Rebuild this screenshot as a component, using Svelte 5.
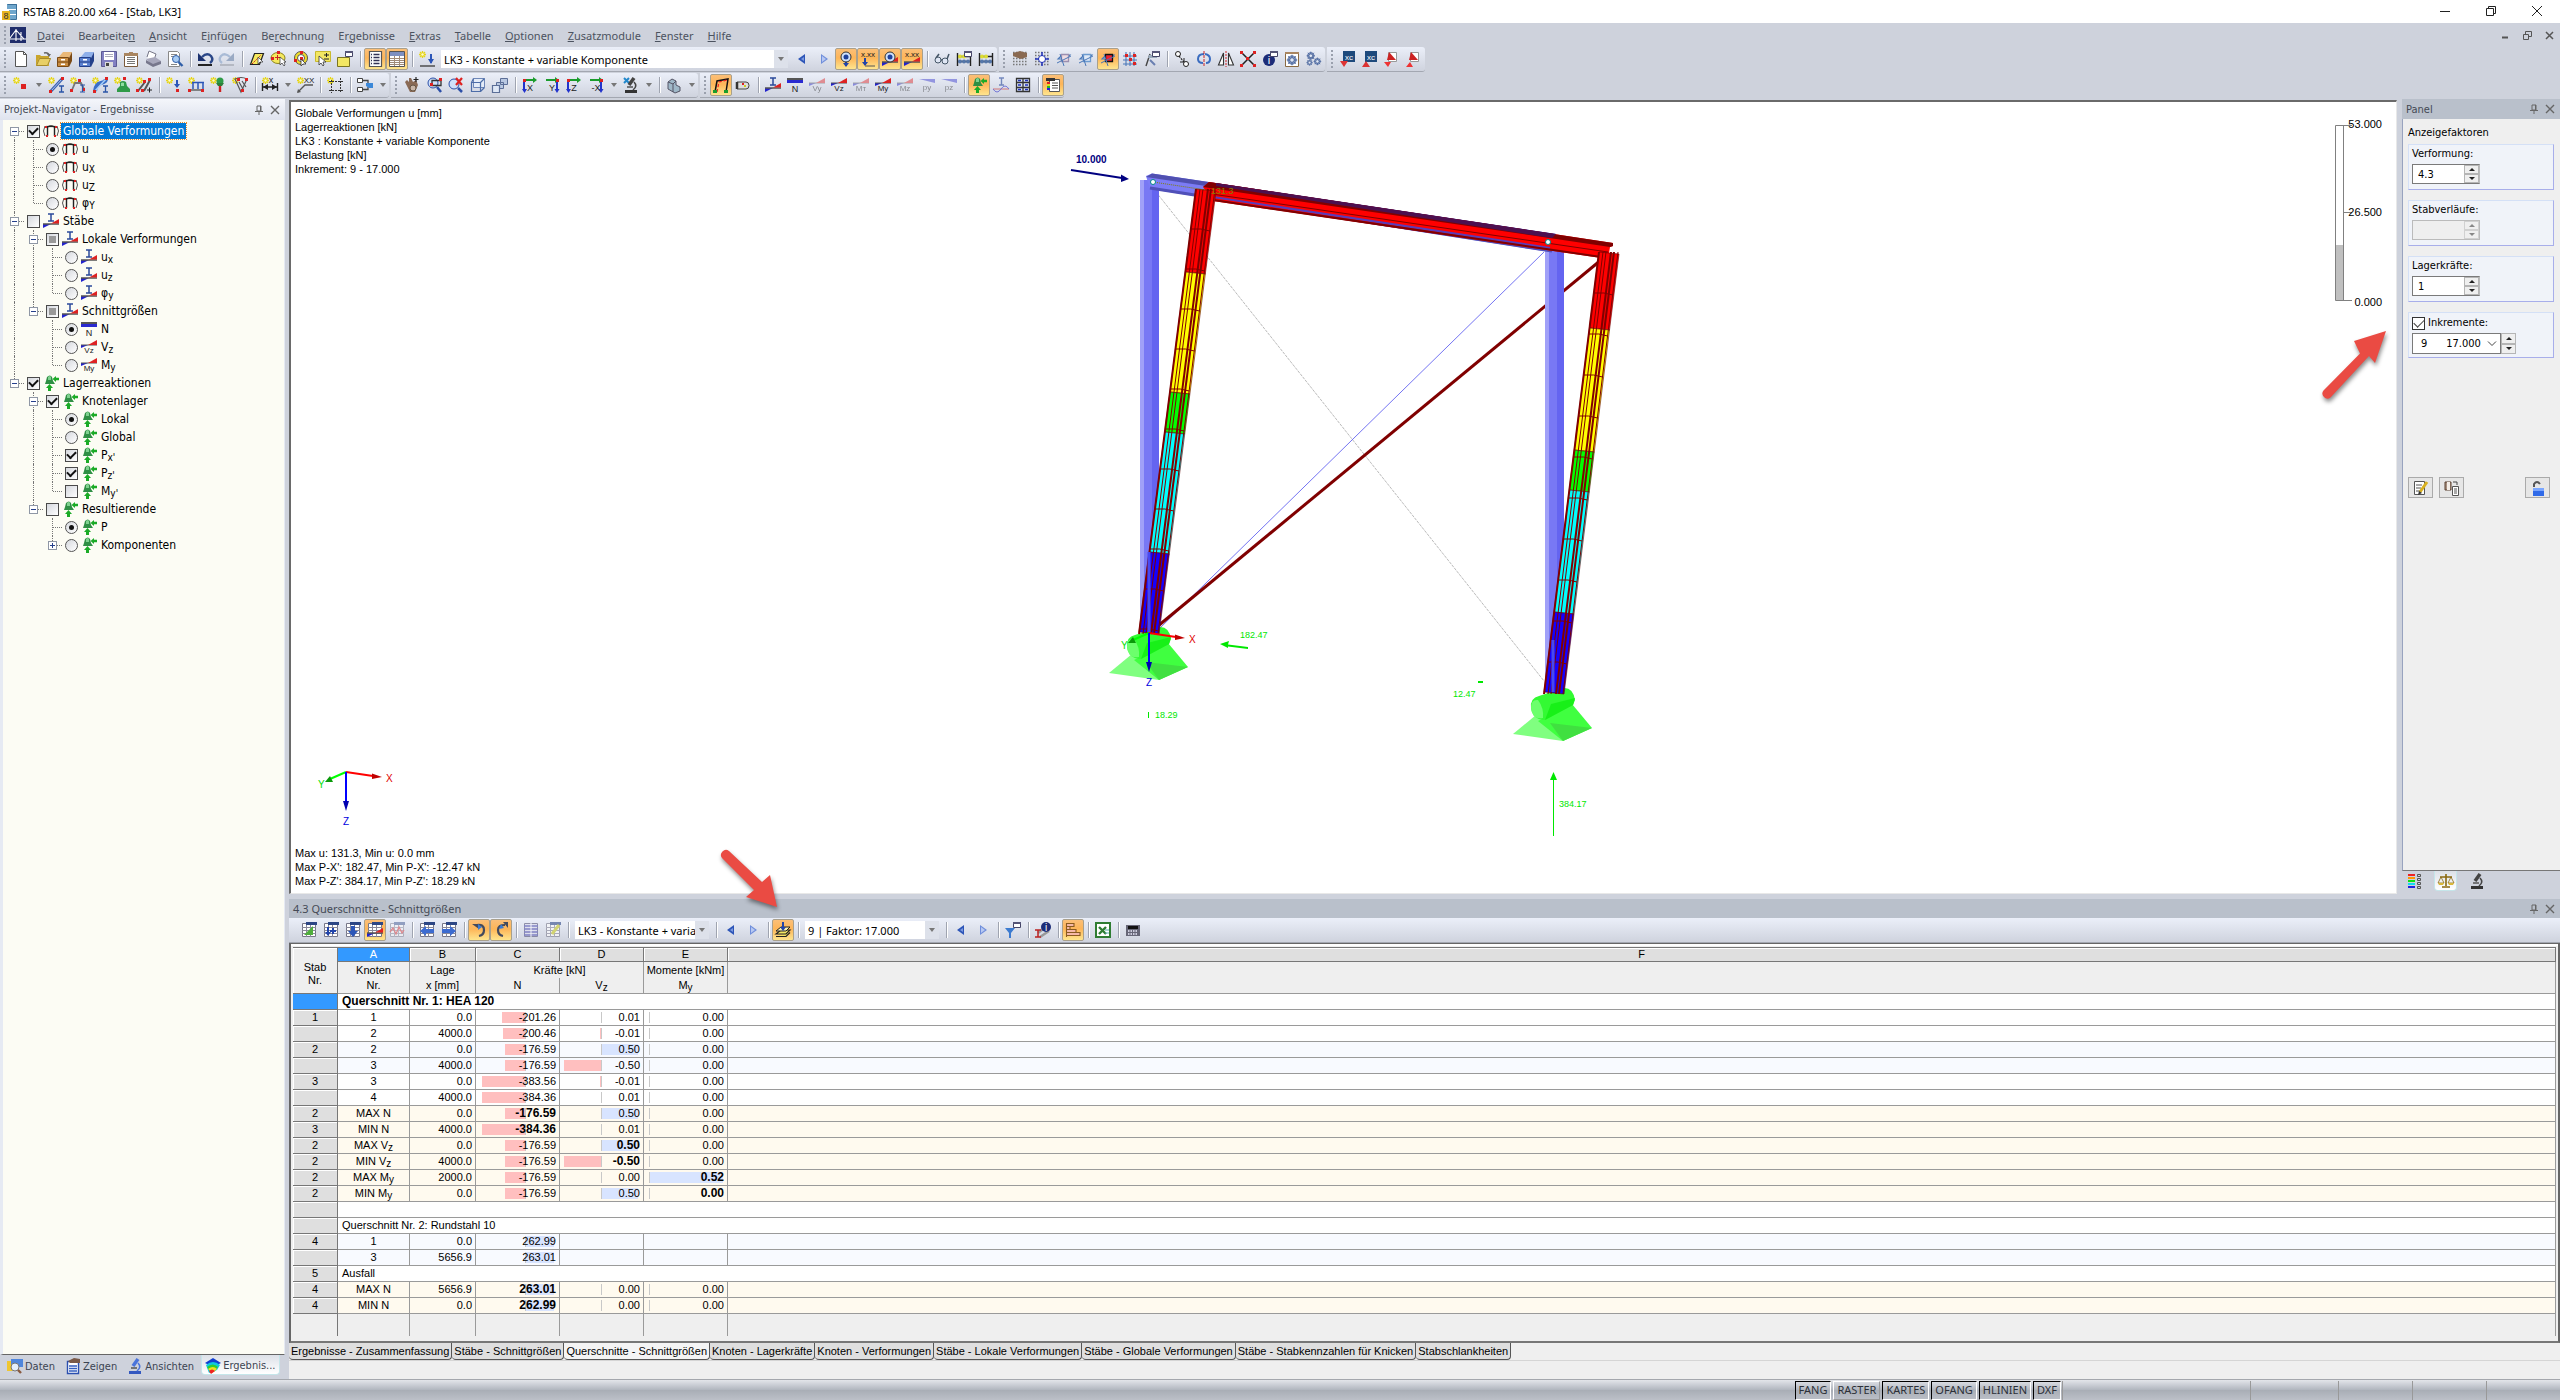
<script>
  // small helpers for the 16x16 toolbar glyphs
  const s = (d, color = '#222', w = 1, fill = 'none') =>
    `<path d="${d}" stroke="${color}" stroke-width="${w}" fill="${fill}"/>`;
  const f = (d, fill) => `<path d="${d}" fill="${fill}"/>`;
  const c = (x, y, r, fill, stroke = 'none') =>
    `<circle cx="${x}" cy="${y}" r="${r}" fill="${fill}" stroke="${stroke}"/>`;
  const t = (x, y, text, color = '#222', size = 8) =>
    `<text x="${x}" y="${y}" font-size="${size}" font-family="Liberation Sans, sans-serif" fill="${color}" text-anchor="middle">${text}</text>`;

  const star = s('M0 3.500h7M3.500 0v7M1 1l5 5M6 1L1 6', '#e6d516', 1.3) + c(3.5, 3.5, 1.2, '#fffbd0');
  const red = (x, y) => f(`M${x} ${y}h3v3h-3z`, '#d22');
  const wedge = f('M0 15V11L8 11Z', '#22c') + s('M0 11h16', '#555', 1.5) + f('M8 10.500L16 6V10.500Z', '#d22');
  const smallWedge = f('M0 6V9L7 6Z', '#22c') + s('M0 6h16', '#555', 1) + f('M7 6L16 1V6Z', '#d22');
  const win = s('M8.500 .5h7v5h-7z', '#446', 1, '#fff') + f('M8 0h8v2H8z', '#557');
  const dots = s('M1 1.500h14M1 4.500h14M1 7.500h14M1 10.500h14M1 13.500h14', '#777', 1.4).replace('/>', ' stroke-dasharray="1.500 1.500"/>');
  const sheet = s('M1.500 1.500h13v13h-13z', '#778', 1, '#fff') + f('M5 0h11v3H5z', '#2c4685') + s('M1 5.500h14M1 8.500h14M1 11.500h14M5.500 3v12M9.500 3v12', '#889');
  const abacus = s('M1.500 2v13M14.500 2v13M1 5.500h14M1 10.500h14', '#222', 1.4) + c(4, 5.5, 2, '#dd3') + c(8, 5.5, 2, '#dd3') + c(4, 10.5, 2, '#57a') + c(8, 10.5, 2, '#57a') + c(12, 10.5, 2, '#57a');
  const chest = (dark, light, mid) => f('M1 7l5-6h9l-3 6z', light) + f('M12 7l3-6v9l-3 6z', dark) + s('M.5 6.500h11v9H.5z', dark, 1, mid) + s('M1 11h10', dark) + f('M4 8h4v1.500H4zM4 12.500h4v1.500H4z', '#fff');
  const axes = (label, flip) =>
    s(flip ? 'M13 3v11' : 'M2 3v11', '#2233cc', 2) +
    s('M2 3h10', '#1a9c2c', 2) + f('M11 0l4 3-4 3z', '#1a9c2c') +
    red(flip ? 12 : 1, 2) + f(flip ? 'M10.500 12h5L13 16z' : 'M0 12h5L2.500 16z', '#2233cc') + t(8, 14, label, '#222', 9);
  const force = (label, color = '#222') => smallWedge + t(8, 14, label, color, 8);
  const support = f('M4 2q3-3 5 0l1 4 2 3H2l1-3z', '#2f8f45') + f('M5 2q2-2 3 0v3H5z', '#7fd18f') + s('M6.500 16v-4', '#1bab27', 3) + f('M3 13l3.500-4 3.500 4z', '#1bab27') + s('M16 4h-4', '#1bab27', 2.5) + f('M13 1v6L9.500 4z', '#1bab27');
  const frame = s('M4.500 13V4Q8 2 11.500 4v9', '#222', 1.4) + s('M2 13Q-1 8 2 3M14 3q3 5 0 10', '#555', 1) + s('M3 3.500h10', '#222', 1.2) + f('M2 3h2v2H2zM12 3h2v2h-2zM3 12h2v2H3zM11 12h2v2h-2z', '#d22');
  const section = s('M5 1h6M8 1v7M5 8h6', '#2b4a9a', 1.5) + wedge;
  const arrowL = f('M11 3v10L4 8z', '#2d55b8') + f('M10 6v4L7 8z', '#7d9ae0');
  const arrowR = f('M5 3v10l7-5z', '#6f8edb') + f('M6 5v6l4-3z', '#b7c8f2');
  const info = c(7, 9, 6, '#1c2c78') + t(7, 13, 'i', '#fff', 11);
  const lens = c(7, 6, 4.5, '#dbe8fb', '#3c5da8') + s('M10 10l5 5', '#3c5da8', 2.5);
  const scope = f('M2 13h12v3H2z', '#333') + s('M11 1L6 8', '#444', 3.5) + s('M11 5q4 4-1 8', '#444', 1.6) + s('M4 10h6', '#555', 1.5);
  const gear = c(8, 8, 5.5, '#8ea6cf', '#3c5488') + s('M8 1v14M1 8h14M3 3l10 10M13 3L3 13', '#4c68a2', 1.4) + c(8, 8, 3, '#dfe7f5', '#3c5488');
  const pyramid = (d) => s('M4.500 1.500h8v9h-8z', '#999', 1, '#fff') + f('M5 1l7 8H3z', '#c22') + f(d, '#e33');
  const view = (color, fill) => s('M2 8l4-4h8l-4 4z', '#4b78b8', 1.1, '#cfe2f7') + s('M5.500 3.500h7v7h-7z', color, 1.3, fill) + s('M8 15L4 3M1 12L15 5', '#4b78b8', 1);

  const icons = {
    new: s('M2.500 .5h8l3 3v12h-11z', '#555', 1, '#fff') + s('M10.500 .5v3h3', '#555'),
    open: f('M1 4h4l1 1h8v10H1z', '#c9a52c') + f('M1 15l3-8h12l-3 8z', '#e8cf66') + s('M1.500 14.500l3-7h11l-3 7z', '#94771a', .8) + s('M9 2q4-1 5 2', '#666', 1.5) + f('M12 3h4l-2 3z', '#666'),
    boxBrown: chest('#7b4a15', '#e9b878', '#c98d42'),
    boxBlue: chest('#24408a', '#8fb0ea', '#5a80cf'),
    save: s('M.5 .5h15v15H.5z', '#5c5a94', 1, '#8280c2') + f('M3 1h10v8H3z', '#fff') + s('M4 3.500h8M4 5.500h8', '#aab') + f('M4 11h8v5H4z', '#ddd') + f('M5 12h3v3H5z', '#444'),
    report: s('M1.500 2.500h13v13h-13z', '#7b5a3b', 1, '#fff') + f('M1 2h5V1h4v1h5v3H1z', '#a98560') + s('M4 6.500h8M4 8.500h8M4 10.500h8M4 12.500h8', '#777', 1),
    print: f('M4 0l7 3-2 6H2z', '#fff') + s('M9 9l2-6-7-3-2 6', '#778', 1) + f('M1 8l9-2 6 4-8 5z', '#a8a8bc') + f('M1 9l7 4 8-3v3l-8 3-7-4z', '#77778c'),
    preview: s('M1.500 .5h9l2 2v13h-11z', '#888', 1, '#fff') + s('M4 3.500h6M4 5.500h3M4 13.500h6', '#888') + c(9, 8, 3.5, '#a9cdf5', '#2f5ea8') + s('M11.500 11l4 4', '#2f5ea8', 2.4),
    undo: s('M5 6q5-5 9-1 3 4-1 7', '#2a4788', 2.4) + f('M1 2v8h8z', '#1c3270') + f('M1 13h14v2H1z', '#222'),
    redo: s('M11 6Q6 1 2 5q-3 4 1 7', '#a9bbd6', 2.2) + f('M15 2v8H7z', '#9aaac4') + f('M1 13h14v2H1z', '#b4b8c2'),
    plane: s('M5.500 2.500h9l-4 11h-9z', '#222', 1.2, '#f5e95e') + s('M3 13l9-9', '#c22').replace('/>', ' stroke-dasharray="2 1"/>') + s('M9 6v7l2-2h3z', '#333', .7, '#fff'),
    selCircle: `<ellipse cx="7" cy="7" rx="7" ry="5.500" fill="#f5e95e" stroke="#8d8420"/>` + red(0, 6) + red(6, 0) + s('M6.500 4v5M4 6.500h5', '#c22') + s('M9 6v8l2-2 2 3 1-1-1-3h2z', '#333', .7, '#fff'),
    selRing: c(8, 7, 6.5, '#f0df2a', '#555') + c(8, 7, 3.5, '#fff', '#555') + red(7, 0) + red(7, 6) + red(1, 8) + s('M8 8v7l2-2h3z', '#333', .8, '#fff'),
    selPlus: s('M.5 .5h15v10H.5z', '#c9ba2e', 1, '#f3e763') + s('M9 4h5M11.500 2v4M9 8h5', '#222') + s('M4 5v9l2-2 2 3 1-1-1-3h3z', '#333', .8, '#fff'),
    winYellow: s('M.5 6.500h12v9H.5z', '#7a7420', 1, '#f3e763') + win,
    list: s('M2.500 .5h12v15h-12z', '#555', 1.2, '#fff') + s('M4 3.500h1M6.500 3.500h6M4 6.500h1M6.500 6.500h6M4 9.500h1M6.500 9.500h6M4 12.500h1M6.500 12.500h6', '#335', 1.3),
    tableIcon: s('M.5 .5h15v15H.5z', '#555', 1, '#fff') + f('M1 1h14v4H1z', '#7d8fc0') + s('M1 7.500h14M1 9.500h14M1 11.500h14M1 13.500h14M5.500 5v10M10.500 5v10', '#a08a78'),
    loadNew: star + s('M12 3v9', '#2a55b8', 2) + f('M9 8h6l-3 5z', '#2a55b8') + s('M1 15h15', '#444', 1.4),
    arrowL, arrowR,
    eyeLoad: s('M8 3v12', '#2244aa', 2) + f('M5 12h6l-3 4z', '#2244aa') + c(8, 6, 5, '#cfe0fa', '#333') + c(8, 6, 2.5, '#1f3f99'),
    xxxLoad: t(8, 6, 'x.xx', '#222', 8) + s('M5 7v7', '#2244aa', 2) + f('M2 11h6l-3 4z', '#2244aa') + s('M5 15h10', '#555'),
    eyeWedge: wedge + c(8, 6, 5, '#cfe0fa', '#333') + c(8, 6, 2.5, '#1f3f99'),
    xxxWedge: t(8, 6, 'x.xx', '#222', 8) + wedge,
    glasses: c(4, 9, 3, '#dfe6f4', '#456') + c(11, 10, 3, '#dfe6f4', '#456') + s('M2 7l3-4M13 8l2-5M7 9h1', '#456', 1.5),
    abacusWin: abacus + win, abacus,
    handGrid: dots + f('M1 2l7-2 7 2v4l-6 2-8-3z', '#8a6a52'),
    gridSun: dots + c(8, 8, 3.5, '#fff', '#23b') + s('M8 1v4M8 11v4M1 8h4M11 8h4', '#23b', 1.5),
    view1: view('#9a8fb0', '#eedbe2'), view2: view('#6c9bd0', '#dfe9f7'), view3: view('#111', '#e23'),
    gridTri: s('M4 1v14M8 1v14M12 1v14M1 5h14M1 9h14M1 13h14', '#4b78b8', 1.1) + red(3, 3) + red(7, 7) + red(11, 3) + red(11, 11),
    flagWin: s('M2 15L6 3', '#444', 1.4) + f('M5 4h8v3H4z', '#9ab') + win + s('M6 9l5 5', '#6a7fb0', 2),
    copyNodes: c(4, 3, 2.5, '#fff', '#222') + c(12, 13, 2.5, '#fff', '#222') + s('M5 5l5 6', '#222', 1.2).replace('/>', ' stroke-dasharray="2 1"/>') + s('M10 7v4H6', '#222'),
    rotate: s('M8 3Q2 3 2 8q0 4 5 4', '#3a6cc0', 2) + s('M9 3q5 1 5 5t-4 4', '#3a6cc0', 2) + s('M8 0v16', '#c22', 1).replace('/>', ' stroke-dasharray="3 1"/>'),
    mirror: s('M5.500 2v12h-5zM10.500 2v12h5z', '#333', 1.1, '#fff') + s('M8 0v16', '#c22').replace('/>', ' stroke-dasharray="2 1"/>'),
    cross: s('M2 2l12 12M14 2L2 14', '#222', 1.5) + red(0, 0) + red(13, 0) + red(0, 13) + red(13, 13) + red(6, 6),
    infoWin: info + win,
    gearSheet: s('M1.500 1.500h13v14h-13z', '#8a6a42', 1, '#fff') + f('M1 1h14v2H1z', '#a98560') + `<g transform="translate(2 3) scale(.75)">${gear}</g>`,
    gears: `<g transform="scale(.6)">${gear}</g><g transform="translate(7 6) scale(.55)">${gear}</g><g transform="translate(0 8) scale(.45)">${gear}</g>`,
    xcDown: f('M3 0h12v11H3z', '#1e4a7c') + t(9, 9, 'xc', '#fff', 8) + f('M0 10h8l-4 6z', '#d33'),
    xcUp: f('M3 0h12v11H3z', '#1e4a7c') + t(9, 9, 'xc', '#fff', 8) + f('M0 16h8l-4-6z', '#d33'),
    pyrDown: pyramid('M0 11h7l-3 5z'), pyrUp: pyramid('M0 16h7l-3-5z'),

    node: star + f('M8 7h5v5H8z', '#d22'),
    member: star + s('M3 14L14 2', '#3a5fae', 3) + s('M3 14L14 2', '#a9c4ee', 1) + red(1, 13) + red(13, 0) + s('M11 9h5M13.500 9v6M11 15h5', '#2b55a8', 1.3),
    polyline: star + s('M2 13l3-7 6 0 3 6', '#777', 1.8) + red(0, 12) + red(8, 2) + red(12, 11) + s('M10 8h5M12.500 8v7M10 15h5', '#2b55a8', 1.2),
    memberSet: star + s('M3 14Q4 7 9 6T14 2', '#3a6fc8', 4) + s('M3 14L14 2', '#a9d0f7', 1.5) + red(1, 13) + red(13, 0) + s('M11 9h5M13.500 9v6M11 15h5', '#2b55a8', 1.3),
    nodeSupport: star + f('M6 5q3-2 6 0l1 4 3 3v3H3v-3l3-3z', '#2f9b48') + f('M7 6q2-1 3 0v3H7z', '#8fdca0') + red(9, 0),
    divide: star + s('M2 14L9 5M8 14L14 3', '#555', 2) + red(0, 12) + red(5, 12) + red(7, 3) + red(12, 1) + s('M11 13h5M13.500 10.500v5', '#222'),
    nodeLoad: star + s('M11 3v7', '#2a55b8', 2) + f('M8 7h6l-3 4z', '#2a55b8') + red(10, 12),
    memberLoad: star + s('M4 5.500h12M5 6v6M10 6v6M15 6v6', '#2a55b8', 1.5) + s('M1 13h14', '#777', 1.8) + red(0, 12) + red(13, 12),
    colLoad: star + c(10, 4, 3.5, '#2f9b48') + f('M6 6h8l-2 3H8z', '#2f7f3c') + s('M10 9v6', '#c22', 2.4),
    tempLoad: star + s('M3 2q6-3 12 0l-6 13z', '#555', 1.2) + s('M10 4l4 6M7 5l4 7', '#555', 1.2) + red(5, 1) + red(13, 1) + red(9, 12),
    dim: star + s('M1 10h14M.5 6v8M15.500 6v8', '#222', 1.4) + f('M1 10l5-3v6zM15 10l-5-3v6z', '#222') + t(9, 6, 'x', '#222', 9),
    comment: star + t(12, 6, 'XX', '#222', 8) + s('M1 15l7-7h8', '#555', 1.3) + f('M0 16l1-4 3 3z', '#555'),
    guide: star + s('M4.500 3v13M13.500 1v15M2 4.500h14M2 13.500h14', '#333').replace('/>', ' stroke-dasharray="2 1"/>'),
    contour: s('M.5 1.500h5v4h-5zM.5 10.500h5v4h-5z', '#444', 1, '#fff') + s('M6 3.500h5V6M6 12.500h5V10', '#444', 1.3) + f('M9 6h7v5h-4l-3-2z', '#3c88d8'),
    hand: f('M1 5l2-2 2 2 0-4 2 0 2 4 3-2 2 5-3 7H6z', '#8a6a55') + s('M12 0v5M9.500 2.500h5', '#222', 1.2) + c(9, 11, 3, '#c9b6a8', '#654'),
    zoomWin: c(7, 6, 5, '#cfe0fa', '#2c4fa8') + s('M6 3.500h9v5H6z', '#333', 1.3) + red(4, 6) + red(13, 1) + s('M11 10l4 5', '#2c4fa8', 2.5),
    zoomOut: c(6, 7, 5, '#cfe0fa', '#2c4fa8') + s('M10 11l4 4', '#2c4fa8', 2.5) + s('M8 1l6 7M14 1L8 8', '#d22', 2.2),
    cube: s('M3.500 1.500h11v9h-11z', '#6f87b8', 1, '#e4ecf8') + s('M1.500 5.500h9v9h-9zM1.500 5.500l2-4M10.500 5.500l4-4M10.500 14.500l4-4', '#4d6da8', 1.2),
    cubes: s('M8.500 1.500h7v6h-7zM4.500 5.500h7v6h-7z', '#5c6f98', 1, '#b9c8e2') + s('M.5 8.500h7v7h-7z', '#5c6f98', 1.2, '#dfe8f6'),
    axX: axes('X'), axY: axes('Y', true), axZ: axes('Z'), axNX: axes('-X', true),
    scopeX: s('M1 1l5 5M6 1L1 6', '#28c', 2) + scope, scope,
    solid: s('M2 5l4-3 4 2v4l4 2v4l-5 2-7-4z', '#556', 1, '#9fb8c8') + s('M2 5l5 2v8M7 7l3-3', '#556'),
    frameSel: s('M2 15L4 4l11-2-2 13', '#111', 1.5) + s('M4 15l2-10 8-2', '#e22', 1.2).replace('/>', ' stroke-dasharray="3 2"/>') + f('M0 13h4v3H0zM11 13h4v3h-4z', '#1a9c2c'),
    cylinder: s('M2 5h9q3 0 3 3.500T11 12H2z', '#444', 1, '#ddd') + s('M2 5v7', '#333', 2.5) + f('M7 6h2v2H7z', '#d22') + f('M9 8h2v2H9z', '#cc2'),
    section, frame, support,
    fN: f('M0 2h16v4H0z', '#2a2ad0') + f('M0 1h16v2H0z', '#555') + t(8, 15, 'N', '#222', 9),
    fVz: force('Vz'), fMy: force('My'),
    dVy: `<g opacity=".45">${force('Vy')}</g>`, dMt: `<g opacity=".45">${force('Mт')}</g>`, dMz: `<g opacity=".45">${force('Mz')}</g>`,
    dPy: `<g opacity=".45">${f('M0 2h16v4z', '#33c') + t(8, 13, 'py')}</g>`, dPz: `<g opacity=".45">${f('M0 2h16v4z', '#33c') + t(8, 13, 'pz')}</g>`,
    sine: `<g opacity=".6">${s('M6 1h5M8.500 1v7M6 8h5', '#2b4a9a', 1.4) + s('M0 12h16', '#c33') + s('M0 12q4 6 8 0t8 0', '#33c')}</g>`,
    grid4: s('M1.500 1.500h13v13h-13zM8 1v14M1 5.500h14M1 10.500h14', '#333', 1.3, '#dde6f8') + s('M3 3.500h3M10 3.500h3M3 8h3M10 8h3M3 12.500h3M10 12.500h3', '#23b', 1.5),
    legend: s('M4.500 2.500h10v12h-10z', '#555', 1, '#fff') + s('M7 6h6M7 8.500h6M7 11h6', '#555') + f('M1 1h9v3H1z', '#333') + f('M2 5h3v2H2z', '#d22') + f('M2 7h3v2H2z', '#dd2') + f('M2 9h3v2H2z', '#2b2') + f('M2 11h3v2H2z', '#22d'),

    tGreen: sheet + f('M3 13L12 4v9z', '#4fae3c'), tPlus: sheet + s('M5 5v8M10 6v6M7 9h6', '#2244aa', 2) + f('M2 10h6l-3 4z', '#2244aa'),
    tDown: sheet + s('M8 4v7', '#2b55b8', 4) + f('M3 9h10l-5 6z', '#2b55b8'), tWedge: sheet + wedge,
    tWave: `<g opacity=".45">${sheet + s('M1 10l3-4 3 6 3-7 3 6 2-3', '#d22', 1.3)}</g>`,
    tLeft: sheet + f('M1 9l6-5v3h8v4H7v3z', '#3c6bd0'), tRight: sheet + f('M15 9L9 4v3H1v4h8v3z', '#3c6bd0'),
    hookR: s('M6 3q7-1 7 5 0 5-5 6', '#444a5c', 2.2) + f('M1 2h7v5z', '#444a5c') + f('M7 2l4 3-4 3z', '#3c7bd0'), hookL: s('M12 3q-7 0-7 5 0 5 5 6', '#444a5c', 2.2) + f('M10 0h5v6z', '#444a5c') + f('M8 2l3 4-5 1z', '#3c7bd0'),
    rows: `<g opacity=".6">${s('M1.500 1.500h13v13h-13z', '#557', 1, '#dde') + s('M1 4h14M1 7h14M1 10h14M1 13h14', '#44a', 1.6) + s('M8 1v14', '#fff')}</g>`,
    pencilSheet: `<g opacity=".6">${sheet + s('M14 3L7 12', '#cc2', 3)}</g>`,
    layers: s('M1 12l5-4h9l-4 4zM1 14.500h10l4-4', '#222', 1.2, '#f3e763') + s('M1 9l5-4h9l-4 4z', '#222', 1, '#fff3b0') + s('M8 0v6', '#2244aa', 2) + f('M5 5h6L8 9z', '#2244aa'),
    filter: f('M0 6h10l-4 5v5H4v-5z', '#3c7bd0') + win, infoMember: s('M3 11l8-6M5 15l9-6', '#999', 2.4) + s('M0 8h6M3 8v7M0 15h6', '#b22', 1.5) + c(11, 5, 5, '#1c2c78') + t(11, 9, 'i', '#fff', 10),
    bars: s('M1.500 1v14M1 1.500h8v3H1M1 4.500h4v3H1M1 7.500h10v3H1M1 10.500h14v3H1', '#8a5a20', 1.1, '#f5b8a8'),
    excel: s('M1 1h14v14H1z', '#2f7d32', 2, '#fff') + s('M4 5l7 7M11 5l-7 7', '#2f7d32', 2.4) + s('M10 8h4M10 11h4', '#5aa', 1),
    calc: f('M1 3h14v11H1z', '#667') + f('M3 4h10v3H3z', '#111') + s('M3 9h10M3 12h10', '#eef', 1.6).replace('/>', ' stroke-dasharray="1.500 1"/>'),

    folderLens: f('M0 3h6v10H0z', '#efc630') + f('M4 1h12v8H4z', '#4f86dc') + c(8, 9, 4, '#e4effb', '#777') + s('M11 12l3 3', '#8a5a40', 2.4),
    show: s('M2.500 3.500h11v12h-11z', '#2b4fb0', 1.4, '#fff') + s('M4 8h8M4 10.500h8M4 13h8', '#345fc0', 1.4) + f('M3 3l6-3 6 1v4H5z', '#7a5a48'),
    scopeBlue: scope.replaceAll('#333', '#3358c0').replaceAll('#444', '#4a74dc'),
    rainbow: f('M0 5l8-5 8 5-8 4z', '#123fd0') + f('M1 7q7-6 14 0l-3 5-8 3z', '#10c8e0') + f('M2 9q6-5 11 0l-3 4-4 2z', '#2fd02f') + f('M3 11q5-4 9 0l-5 4z', '#f0e020') + f('M4 13q3-3 6 0l-4 3z', '#e22'),
    colorScale: ['#e22', '#f90', '#1d1', '#1de', '#22d'].map((k, i) => f(`M1 ${i * 3 + 1}h7v2h-7z`, k)).join('') + s('M10.500 1.500h3v2h-3zM10.500 5.500h3v2h-3zM10.500 9.500h3v2h-3zM10.500 13.500h3v2h-3z', '#555'),
    scales: s('M8 1v12M2 4h12M4 14h8', '#8a6a10', 1.6) + s('M3 4l-3 6h6zM13 4l-3 6h6z', '#8a6a10', .8) + f('M0 10h6l-1 2H1zM10 10h6l-1 2h-4z', '#d8b83a'),
    edit: s('M1.500 1.500h10v13h-10z', '#555', 1, '#fff') + s('M3 5h6M3 8h5M3 11h4', '#555') + s('M14 2L7 12', '#d8b020', 3) + f('M5 15l1-4 3 2z', '#333'),
    pages: s('M1 2h6v8H1z', '#5a4030', 1, '#a89080') + f('M3 2h3v8H3z', '#f4eee8') + s('M8.500 6.500h6v9h-6z', '#555', 1, '#fff') + s('M10 9h3M10 11h3M10 13h3', '#555') + s('M9 2h4v3', '#444'),
    lock: s('M4 7V4q3-4 6 0', '#555', 2) + f('M3 8h11v8H3z', '#2f6ae8') + f('M3 8h11v3H3z', '#7aa6ff'),
    app: f('M5 0h10v5H5zM7 6h8v4H7zM8 11h6v5H8z', '#6fa6cc') + s('M5.500 .5h9v15h-6', '#3b6f98') + f('M0 7h8v9H0z', '#e6b422') + t(4, 15, '8', '#333', 9),
    logo: f('M0 0h16v16H0z', '#1f2d6b') + s('M0 12h16M6 2v12M11 5v9M6 3L0 11M6 3l8 9', '#fff', 1.1)
  };

  // '|' is a separator, 'v' a drop-down marker, '*' marks a pressed button
  const row1a = 'new open boxBrown boxBlue save report print preview | undo redo | plane selCircle selRing selPlus winYellow | *list *tableIcon | loadNew'.split(' ');
  const row1b = 'arrowL arrowR *eyeLoad *xxxLoad *eyeWedge *xxxWedge | glasses abacusWin abacus'.split(' ');
  const row1c = 'handGrid gridSun view1 view2 *view3 gridTri flagWin | copyNodes rotate mirror cross infoWin gearSheet gears'.split(' ');
  const row1d = 'xcDown xcUp pyrDown pyrUp'.split(' ');
  const row2 = [
    'node v member polyline memberSet nodeSupport divide | nodeLoad memberLoad colLoad tempLoad | dim v comment | guide | contour v',
    'hand zoomWin zoomOut cube cubes | axX axY axZ axNX v scopeX v | solid v',
    '*frameSel cylinder | section fN dVy fVz dMt fMy dMz dPy dPz | *support sine grid4 | *legend'
  ].map((row) => row.split(' '));
  const dock1 = 'tGreen tPlus tDown *tWedge tWave | tLeft tRight | *hookR *hookL | rows pencilSheet |'.split(' ');
  const dock2 = '| arrowL arrowR | *layers |'.split(' ');
  const dock3 = '| arrowL arrowR | filter | infoMember | *bars | excel | calc'.split(' ');

  const menus = [
    ['', 'D', 'atei'], ['Bearbeite', 'n', ''], ['', 'A', 'nsicht'], ['E', 'i', 'nfügen'], ['Be', 'r', 'echnung'],
    ['Er', 'g', 'ebnisse'], ['', 'E', 'xtras'], ['', 'T', 'abelle'], ['', 'O', 'ptionen'], ['', 'Z', 'usatzmodule'],
    ['', 'F', 'enster'], ['', 'H', 'ilfe']
  ];

  const nodes = [
    { d: 0, open: true, type: 'checkbox', on: true, icon: 'frame', label: 'Globale Verformungen', selected: true },
    { d: 1, type: 'radio', group: 'global', on: true, icon: 'frame', label: 'u' },
    { d: 1, type: 'radio', group: 'global', icon: 'frame', label: 'u', sub: 'X' },
    { d: 1, type: 'radio', group: 'global', icon: 'frame', label: 'u', sub: 'Z' },
    { d: 1, type: 'radio', group: 'global', icon: 'frame', label: 'φ', sub: 'Y' },
    { d: 0, open: true, type: 'checkbox', icon: 'section', label: 'Stäbe' },
    { d: 1, open: true, type: 'checkbox', mixed: true, icon: 'section', label: 'Lokale Verformungen' },
    { d: 2, type: 'radio', group: 'member', icon: 'section', label: 'u', sub: 'x' },
    { d: 2, type: 'radio', group: 'member', icon: 'section', label: 'u', sub: 'z' },
    { d: 2, type: 'radio', group: 'member', icon: 'section', label: 'φ', sub: 'y' },
    { d: 1, open: true, type: 'checkbox', mixed: true, icon: 'section', label: 'Schnittgrößen' },
    { d: 2, type: 'radio', group: 'member', on: true, icon: 'fN', label: 'N' },
    { d: 2, type: 'radio', group: 'member', icon: 'fVz', label: 'V', sub: 'z' },
    { d: 2, type: 'radio', group: 'member', icon: 'fMy', label: 'M', sub: 'y' },
    { d: 0, open: true, type: 'checkbox', on: true, icon: 'support', label: 'Lagerreaktionen' },
    { d: 1, open: true, type: 'checkbox', on: true, icon: 'support', label: 'Knotenlager' },
    { d: 2, type: 'radio', group: 'axes', on: true, icon: 'support', label: 'Lokal' },
    { d: 2, type: 'radio', group: 'axes', icon: 'support', label: 'Global' },
    { d: 2, type: 'checkbox', on: true, icon: 'support', label: 'P', sub: "x'" },
    { d: 2, type: 'checkbox', on: true, icon: 'support', label: 'P', sub: "z'" },
    { d: 2, type: 'checkbox', icon: 'support', label: 'M', sub: "y'" },
    { d: 1, open: true, type: 'checkbox', icon: 'support', label: 'Resultierende' },
    { d: 2, type: 'radio', group: 'result', on: true, icon: 'support', label: 'P' },
    { d: 2, open: false, type: 'radio', group: 'result', icon: 'support', label: 'Komponenten' }
  ];

  // does the branch at this depth go on below row i?
  function continues(i, depth) {
    for (let j = i + 1; j < nodes.length; j++) {
      if (nodes[j].d < depth) return false;
      if (nodes[j].d === depth) return true;
    }
    return false;
  }

  function guides(node, i) {
    const cells = [];
    for (let k = 0; k < node.d; k++) cells.push(continues(i, k) ? 'full' : '');
    return cells;
  }

  const rows = [
    { nr: '', title: 'Querschnitt Nr. 1: HEA 120', bold: true, current: true },
    { nr: '1', v: ['1', '0.0', '-201.26', '0.01', '0.00'] },
    { nr: '', v: ['2', '4000.0', '-200.46', '-0.01', '0.00'] },
    { nr: '2', v: ['2', '0.0', '-176.59', '0.50', '0.00'], tone: 'blue' },
    { nr: '', v: ['3', '4000.0', '-176.59', '-0.50', '0.00'], tone: 'blue' },
    { nr: '3', v: ['3', '0.0', '-383.56', '-0.01', '0.00'] },
    { nr: '', v: ['4', '4000.0', '-384.36', '0.01', '0.00'] },
    { nr: '2', v: ['MAX N', '0.0', '-176.59', '0.50', '0.00'], tone: 'cream', strong: 2 },
    { nr: '3', v: ['MIN N', '4000.0', '-384.36', '0.01', '0.00'], tone: 'cream', strong: 2 },
    { nr: '2', v: ['MAX V', '0.0', '-176.59', '0.50', '0.00'], sub: 'z', tone: 'cream', strong: 3 },
    { nr: '2', v: ['MIN V', '4000.0', '-176.59', '-0.50', '0.00'], sub: 'z', tone: 'cream', strong: 3 },
    { nr: '2', v: ['MAX M', '2000.0', '-176.59', '0.00', '0.52'], sub: 'y', tone: 'cream', strong: 4 },
    { nr: '2', v: ['MIN M', '0.0', '-176.59', '0.50', '0.00'], sub: 'y', tone: 'cream', strong: 4 },
    { nr: '', title: '' },
    { nr: '', title: 'Querschnitt Nr. 2: Rundstahl 10' },
    { nr: '4', v: ['1', '0.0', '262.99', '', ''], tone: 'blue' },
    { nr: '', v: ['3', '5656.9', '263.01', '', ''], tone: 'blue' },
    { nr: '5', title: 'Ausfall' },
    { nr: '4', v: ['MAX N', '5656.9', '263.01', '0.00', '0.00'], tone: 'cream', strong: 2 },
    { nr: '4', v: ['MIN N', '0.0', '262.99', '0.00', '0.00'], tone: 'cream', strong: 2 }
  ];

  // zero line and pixels per unit of the value bars, by column
  const scale = { 2: { zero: 49, unit: 43 / 384.36 }, 3: { zero: 41, unit: 37 / 0.5 }, 4: { zero: 5, unit: 74 / 0.52 } };

  function bar(col, text) {
    const value = Number(text);
    const { zero, unit } = scale[col];
    const width = Math.round(Math.abs(value) * unit);
    return { width, left: value < 0 ? zero - width : zero, negative: value < 0 };
  }

  const sheets = [
    'Ergebnisse - Zusammenfassung', 'Stäbe - Schnittgrößen', 'Querschnitte - Schnittgrößen', 'Knoten - Lagerkräfte',
    'Knoten - Verformungen', 'Stäbe - Lokale Verformungen', 'Stäbe - Globale Verformungen',
    'Stäbe - Stabkennzahlen für Knicken', 'Stabschlankheiten'
  ];
  let activeSheet = $state(2);

  const toggles = ['FANG', 'RASTER', 'KARTES', 'OFANG', 'HLINIEN', 'DXF'];

  // deformed columns: left edge at the top and bottom, colour bands by y
  const columns = [
    { top: [1196, 189], bottom: [1139, 632], step: 40, bands: [[189, 272, '#f00'], [272, 392, '#ff0'], [392, 432, '#0f0'], [432, 552, '#0ff'], [552, 632, '#1400ff']] },
    { top: [1599, 252], bottom: [1544, 692], step: 41, bands: [[252, 328, '#f00'], [328, 450, '#ff0'], [450, 490, '#0f0'], [490, 612, '#0ff'], [612, 692, '#1400ff']] }
  ];
  const edge = (col, y) => col.top[0] + ((y - col.top[1]) * (col.bottom[0] - col.top[0])) / (col.bottom[1] - col.top[1]);
  const band = (col, [y1, y2]) =>
    `${edge(col, y1)},${y1} ${edge(col, y1) + 20},${y1 + 2} ${edge(col, y2) + 20},${y2 + 2} ${edge(col, y2)},${y2}`;
  const rungs = (col) => {
    const ys = [];
    for (let y = col.top[1] + col.step; y < col.bottom[1]; y += col.step) ys.push(y);
    return ys;
  };
</script>

{#snippet glyph(name)}
  <svg class="icon" viewBox="0 0 16 16" width="16" height="16" fill="none" aria-hidden="true">{@html icons[name]}</svg>
{/snippet}

{#snippet tools(items)}
  {#each items as item}
    {#if item === '|'}
      <span class="sep"></span>
    {:else if item === 'v'}
      <button class="drop" aria-label="Mehr"><i class="caret"></i></button>
    {:else}
      <button class="tool" class:pressed={item[0] === '*'} aria-label={item.replace('*', '')}>{@render glyph(item.replace('*', ''))}</button>
    {/if}
  {/each}
{/snippet}

{#snippet pinClose()}
  <span class="dock-buttons">
    <button aria-label="Anheften"><svg width="10" height="10" viewBox="0 0 10 10"><path d="M3 1h4v5H3zM1 6.500h8M5 6v4M6.500 1v5" fill="none" stroke="#666" /></svg></button>
    <button aria-label="Schließen"><svg width="10" height="10" viewBox="0 0 10 10"><path d="M1 1l8 8M9 1L1 9" stroke="#666" stroke-width="1.4" /></svg></button>
  </span>
{/snippet}

{#snippet bearing(x, y)}
  <g transform="translate({x} {y})">
    <path d="M0 46L23 27 38 36 50 53Z" fill="#80ff80" />
    <path d="M25 33L59 16 79 40 50 53Z" fill="#40ff40" />
    <path d="M37 35L79 40 50 53Z" fill="#40e040" />
    <path d="M18 20Q17 10 26 8L50 0Q60 -1 62 12L60 17 32 32Q20 32 18 20Z" fill="#33fa33" />
    <path d="M18 20Q18 11 25 12 31 20 30 30 19 32 18 20Z" fill="#6cff6c" />
    <path d="M38 16L62 10 60 17 32 32Z" fill="#18f018" />
  </g>
{/snippet}

{#snippet triad(x, y, ax)}
  <g transform="translate({x} {y})">
    <path d="M0 0L-16 7" stroke="#0f0" stroke-width="2" />
    <path d="M-21 10L-16 4-13 10Z" fill="#0a9a0a" />
    <path d="M0 0L27 4" stroke="#f00" stroke-width="2" />
    <path d="M36 5L26 1.500V7Z" fill="#c00000" />
    <path d="M0 0V31" stroke="#00f" stroke-width="2" />
    <path d="M-3 29H3L0 39Z" fill="#0000b0" />
    <text x={ax} y="10" fill="#e00000">X</text>
    <text x="-28" y="16" fill="#00e000">Y</text>
    <text x="-3" y="53" fill="#0000e0">Z</text>
  </g>
{/snippet}

<div class="app">
  <header class="titlebar">
    {@render glyph('app')}
    <span class="title">RSTAB 8.20.00 x64 - [Stab, LK3]</span>
    <span class="window-buttons">
      <button aria-label="Minimieren"><svg width="10" height="10"><path d="M0 5.500h10" stroke="#222" /></svg></button>
      <button aria-label="Verkleinern"><svg width="10" height="10"><path d="M.5 2.500h7v7h-7zM2.500 2V.5h7v7H8" fill="none" stroke="#222" /></svg></button>
      <button aria-label="Schließen"><svg width="10" height="10"><path d="M0 0l10 10M10 0L0 10" stroke="#222" /></svg></button>
    </span>
  </header>

  <nav class="menubar">
    <span class="grip"></span>
    {@render glyph('logo')}
    {#each menus as [before, key, after]}
      <button>{before}<u>{key}</u>{after}</button>
    {/each}
    <span class="child-buttons">
      <button aria-label="Fenster minimieren"><svg width="9" height="9"><path d="M1 6.500h6" stroke="#555" stroke-width="2" /></svg></button>
      <button aria-label="Fenster verkleinern"><svg width="9" height="9"><path d="M.5 3.500h5v5h-5zM2.500 3V.5h6v5H6" fill="none" stroke="#555" /></svg></button>
      <button aria-label="Fenster schließen"><svg width="9" height="9"><path d="M1 1l7 7M8 1L1 8" stroke="#555" stroke-width="1.500" /></svg></button>
    </span>
  </nav>

  <div class="toolrow">
    <div class="toolbar">
      <span class="grip"></span>
      {@render tools(row1a)}
      <div class="combo wide">
        <select aria-label="Lastkombination"><option>LK3 - Konstante + variable Komponente</option></select>
        <i class="caret"></i>
      </div>
      {@render tools(row1b)}
    </div>
    <div class="toolbar"><span class="grip"></span>{@render tools(row1c)}</div>
    <div class="toolbar"><span class="grip"></span>{@render tools(row1d)}</div>
  </div>
  <div class="toolrow">
    {#each row2 as items}
      <div class="toolbar"><span class="grip"></span>{@render tools(items)}</div>
    {/each}
  </div>

  <div class="body">
    <aside class="navigator">
      <div class="nav-head"><span>Projekt-Navigator - Ergebnisse</span>{@render pinClose()}</div>
      <div class="tree">
        {#each nodes as node, i}
          <div class="node">
            {#each guides(node, i) as guide}
              <span class="guide {guide}"></span>
            {/each}
            <span class="guide tee" class:first={i === 0} class:last={!continues(i, node.d)}>
              {#if node.open !== undefined}
                <button class="expander" class:plus={!node.open} aria-label="Auf- oder zuklappen"></button>
              {/if}
            </span>
            <label>
              {#if node.type === 'radio'}
                <input type="radio" name={node.group} checked={node.on} />
              {:else}
                <input type="checkbox" checked={node.on} indeterminate={node.mixed} />
              {/if}
              {@render glyph(node.icon)}
              <span class="caption" class:selected={node.selected}>{node.label}{#if node.sub}<small>{node.sub}</small>{/if}</span>
            </label>
          </div>
        {/each}
      </div>
      <div class="nav-tabs">
        <button>{@render glyph('folderLens')}Daten</button>
        <button>{@render glyph('show')}Zeigen</button>
        <button>{@render glyph('scopeBlue')}Ansichten</button>
        <button class="active">{@render glyph('rainbow')}Ergebnis...</button>
      </div>
    </aside>

    <main>
      <div class="upper">
        <section class="viewport">
          <svg class="scene" viewBox="291 102 2105 791" aria-label="Verformtes Rahmentragwerk">
            <path d="M1156 192L1544 681" stroke="#bbb" stroke-dasharray="3 1" />
            <path d="M1544 252L1160 628" stroke="#7474f2" />
            {@render bearing(1109, 627)}
            {@render bearing(1513, 688)}

            <path d="M1601 260L1158 626" stroke="#800000" stroke-width="3" />
            {#each [[1140, 180, 632], [1545, 243, 692]] as [x, y1, y2]}
              <path d="M{x} {y1}h5V{y2}h-5z" fill="#a0a0f8" />
              <path d="M{x + 4} {y1}h8V{y2}h-8z" fill="#7878f4" />
              <path d="M{x + 12} {y1}h7V{y2}h-7z" fill="#6464f0" />
            {/each}
            <path d="M1146 176L1152 173.500 1556 234 1550 252 1150 189Z" fill="#7c7cf6" />
            <path d="M1146 177L1152 173.500 1556 234 1552 238Z" fill="#5050b0" />
            <path d="M1150 188L1552 251" stroke="#5050b8" stroke-width="3" />

            <path d="M1203 187L1209 182 1613 243 1613 246 1610 247 1608 259 1213 201Z" fill="#f00" />
            <path d="M1203 187L1209 182 1613 243 1613 246 1610 247 1203 187Z" fill="#800000" />
            <path d="M1216 183L1556 234 1552 238 1216 186Z" fill="#4c1050" />
            <path d="M1205 193L1608 252" stroke="#800000" stroke-width="1" />
            <path d="M1213 197L1550 248" stroke="#5a3cb8" stroke-width="2" />
            <path d="M1213 200L1608 258" stroke="#800000" stroke-width="2" />

            {#each columns as col}
              {#each col.bands as b}
                <polygon points={band(col, b)} fill={b[2]} stroke="#600000" stroke-width=".6" />
              {/each}
              {#each rungs(col) as y}
                <path d="M{edge(col, y)} {y}l10 0 9 2" stroke="#800000" fill="none" />
              {/each}
              {#each [[0, 2], [4, 1], [7, 1], [12, 2], [15, 2], [19, 1]] as [dx, w]}
                <path d="M{col.top[0] + dx} {col.top[1]}L{col.bottom[0] + dx} {col.bottom[1] + 2}" stroke="#800000" stroke-width={w} />
              {/each}
            {/each}
            <path d="M1149 552V632M1553 640V692" stroke="#4848f0" stroke-width="3" />

            <path d="M1153 182L1206 190" stroke="#808000" stroke-dasharray="1 1" />
            <circle cx="1153" cy="182" r="2.500" fill="#fff" stroke="#088" />
            <circle cx="1548" cy="242" r="2.500" fill="#fff" stroke="#088" />

            <path d="M1071 170L1122 178" stroke="#000080" stroke-width="2" />
            <path d="M1129 179L1121 174.500V182Z" fill="#000080" />
            <text x="1076" y="163" class="load">10.000</text>
            <text x="1211" y="194" class="value" fill="#808000">131.3</text>

            <g fill="#00e800" stroke="none">
              <path d="M1220 644L1229 641 1228 644.500 1248 647 1248 649 1228 646.500 1228 648Z" />
              <path d="M1478 681h5v2h-5zM1148 712h1v6h-1z" />
              <path d="M1550 780L1553.500 772 1557 780H1554V836H1553V780Z" />
              <text x="1240" y="638" class="value">182.47</text>
              <text x="1453" y="697" class="value">12.47</text>
              <text x="1155" y="718" class="value">18.29</text>
              <text x="1559" y="807" class="value">384.17</text>
            </g>
            {@render triad(1149, 633, 40)}
            {@render triad(346, 772, 40)}

            <path d="M2335.500 125.500h8v175h-8z" fill="#fff" stroke="#808080" />
            <path d="M2336 245h7v55h-7z" fill="#c0c0c0" />
            <path d="M2343 125.500h9M2343 212.500h9M2343 300.500h9" stroke="#808080" />
            <g class="scale-text" text-anchor="end">
              <text x="2382" y="128">53.000</text>
              <text x="2382" y="216">26.500</text>
              <text x="2382" y="306">0.000</text>
            </g>
          </svg>
          <div class="info">
            <span>Globale Verformungen u [mm]</span>
            <span>Lagerreaktionen [kN]</span>
            <span>LK3 : Konstante + variable Komponente</span>
            <span>Belastung [kN]</span>
            <span>Inkrement: 9 - 17.000</span>
          </div>
          <div class="info results">
            <span>Max u: 131.3, Min u: 0.0 mm</span>
            <span>Max P-X': 182.47, Min P-X': -12.47 kN</span>
            <span>Max P-Z': 384.17, Min P-Z': 18.29 kN</span>
          </div>
          <svg class="pointer at-panel" width="70" height="74" viewBox="0 0 70 74"><path d="M3.500 62.500L40 25.500 34 13 66 3 55 35 49 28 10.500 69.500A5 5 0 0 1 3.500 62.500Z" fill="#ea4b43" /></svg>
          <svg class="pointer at-dock" width="66" height="66" viewBox="0 0 66 66"><path d="M12 4L45 35 53 28 60 60 29 50 37 43 5 11A5 5 0 0 1 12 4Z" fill="#ea4b43" /></svg>
        </section>

        <aside class="panel">
          <div class="panel-head"><span>Panel</span>{@render pinClose()}</div>
          <div class="panel-body">
            <p>Anzeigefaktoren</p>
            {#each [['Verformung:', '4.3', false], ['Stabverläufe:', '', true], ['Lagerkräfte:', '1', false]] as [name, value, off], i}
              <div class="factor">
                <label for="factor{i}">{name}</label>
                <div class="spin" class:off>
                  <input id="factor{i}" type="text" {value} disabled={off} />
                  <span class="updown"><button aria-label="Mehr" disabled={off}></button><button aria-label="Weniger" disabled={off}></button></span>
                </div>
              </div>
            {/each}
            <div class="factor">
              <label class="tick"><input type="checkbox" checked /> Inkremente:</label>
              <div class="increment">
                <select aria-label="Inkrement"><option>9 &nbsp;&nbsp;&nbsp;&nbsp; 17.000</option></select>
                <svg width="10" height="6"><path d="M1 .5l4 4 4-4" fill="none" stroke="#444" /></svg>
                <span class="updown"><button aria-label="Mehr"></button><button aria-label="Weniger"></button></span>
              </div>
            </div>
            <div class="actions">
              <button aria-label="Bearbeiten">{@render glyph('edit')}</button>
              <button aria-label="Kopieren">{@render glyph('pages')}</button>
              <button class="right" aria-label="Sperren">{@render glyph('lock')}</button>
            </div>
          </div>
          <div class="panel-tabs">
            <button aria-label="Farbskala">{@render glyph('colorScale')}</button>
            <button class="active" aria-label="Faktoren">{@render glyph('scales')}</button>
            <button aria-label="Filter">{@render glyph('scope')}</button>
          </div>
        </aside>
      </div>

      <section class="dock">
        <div class="panel-head"><span>4.3 Querschnitte - Schnittgrößen</span>{@render pinClose()}</div>
        <div class="dock-tools">
          {@render tools(dock1)}
          <div class="combo">
            <select aria-label="Lastkombination der Tabelle"><option>LK3 - Konstante + variable Komponente</option></select>
            <i class="caret"></i>
          </div>
          {@render tools(dock2)}
          <div class="combo">
            <select aria-label="Laststufe"><option>9 | Faktor: 17.000</option></select>
            <i class="caret"></i>
          </div>
          {@render tools(dock3)}
        </div>
        <div class="sheet">
          <table>
            <colgroup>
              <col class="c-nr" /><col class="c-a" /><col class="c-b" /><col class="c-c" /><col class="c-d" /><col class="c-e" /><col />
            </colgroup>
            <thead>
              <tr class="letters">
                <th class="corner" rowspan="3">Stab<br />Nr.</th>
                <th class="chosen">A</th><th>B</th><th>C</th><th>D</th><th>E</th><th>F</th>
              </tr>
              <tr class="names"><th>Knoten</th><th>Lage</th><th colspan="2">Kräfte [kN]</th><th>Momente [kNm]</th><th></th></tr>
              <tr class="names units"><th>Nr.</th><th>x [mm]</th><th>N</th><th>V<small>z</small></th><th>M<small>y</small></th><th></th></tr>
            </thead>
            <tbody>
              {#each rows as row}
                <tr class={row.tone}>
                  <th class:current={row.current}>{row.nr}</th>
                  {#if row.v}
                    {#each row.v as value, col}
                      <td class:center={col === 0} class:strong={row.strong === col}>
                        {#if col > 1 && value !== ''}
                          {@const b = bar(col, value)}
                          <i class="bar" class:negative={b.negative} style="left: {b.left}px; width: {b.width}px"></i>
                          <i class="zero" style="left: {scale[col].zero}px"></i>
                        {/if}
                        <span>{value}{#if col === 0 && row.sub}<small>{row.sub}</small>{/if}</span>
                      </td>
                    {/each}
                    <td></td>
                  {:else}
                    <td class="heading" class:strong={row.bold} colspan="6">{row.title}</td>
                  {/if}
                </tr>
              {/each}
              <tr class="rest"><th></th><td></td><td></td><td></td><td></td><td></td><td></td></tr>
            </tbody>
          </table>
        </div>
        <div class="sheet-tabs">
          {#each sheets as name, i}
            <button class:active={i === activeSheet} onclick={() => (activeSheet = i)}>{name}</button>
          {/each}
        </div>
      </section>
    </main>
  </div>

  <footer class="statusbar">
    <div class="toggles">
      {#each toggles as name}
        <button class:raised={name === 'RASTER'}>{name}</button>
      {/each}
    </div>
    <span class="cell w1"></span><span class="cell w2"></span><span class="cell w3"></span><span class="cell w3"></span><span class="cell w3"></span>
  </footer>
</div>

<style>
  :global(body) {
    margin: 0;
    overflow: hidden;
  }

  .app {
    height: 100vh;
    display: flex;
    flex-direction: column;
    background: #ced2dc;
    font-family: 'Noto Sans', sans-serif;
    font-size: 11px;
    color: #000;
  }

  .app * {
    box-sizing: border-box;
  }

  button,
  input,
  select {
    font: inherit;
    color: inherit;
    margin: 0;
    padding: 0;
    border: 0;
    background: none;
  }

  .icon {
    flex: none;
    display: block;
    overflow: visible;
  }

  small {
    font-size: 10px;
    line-height: 0;
    vertical-align: -2px;
  }

  /* title and menu */
  .titlebar {
    height: 23px;
    flex: none;
    display: flex;
    align-items: center;
    gap: 5px;
    padding-left: 2px;
    background: #fff;
  }

  .window-buttons {
    margin-left: auto;
    display: flex;
  }

  .window-buttons button {
    width: 46px;
    height: 20px;
  }

  .menubar {
    height: 24px;
    flex: none;
    display: flex;
    align-items: center;
    color: #4c5360;
  }

  .menubar > button {
    padding: 0 7px;
  }

  .menubar .icon {
    margin-right: 4px;
  }

  .child-buttons {
    margin-left: auto;
    display: flex;
  }

  .child-buttons button {
    width: 22px;
  }

  .grip {
    width: 10px;
    height: 18px;
    flex: none;
    border-left: 2px dotted #9aa0ad;
    margin-left: 4px;
    margin-right: -4px;
  }

  /* toolbars */
  .toolrow {
    height: 26px;
    flex: none;
    display: flex;
    gap: 2px;
  }

  .toolbar,
  .dock-tools {
    height: 25px;
    display: flex;
    align-items: center;
    background: linear-gradient(#ebeff9, #cfd3de);
    border-bottom: 1px solid #a3a7b1;
    border-radius: 0 3px 3px 0;
  }

  .tool {
    width: 22px;
    height: 22px;
    flex: none;
    display: flex;
    align-items: center;
    justify-content: center;
  }

  .pressed {
    border: 1px solid #a9a08c;
    border-radius: 2px;
    background: linear-gradient(#fbbf78, #fdb558 45%, #fee58e);
  }

  .sep {
    width: 8px;
    height: 16px;
    flex: none;
    border-left: 1px solid #9fa4b0;
    box-shadow: inset 1px 0 #fff;
    margin-left: 4px;
    margin-right: -4px;
  }

  .drop {
    width: 13px;
    height: 20px;
    flex: none;
    display: flex;
    align-items: center;
    justify-content: center;
  }

  .caret {
    border: 3px solid transparent;
    border-top: 4px solid #777;
    border-bottom: 0;
  }

  .combo {
    width: 134px;
    height: 18px;
    flex: none;
    display: flex;
    align-items: center;
    position: relative;
    background: #fff;
    margin: 0 3px;
  }

  .combo.wide {
    width: 347px;
  }

  .combo select {
    appearance: none;
    flex: 1;
    min-width: 0;
    height: 18px;
    padding-left: 3px;
    border-right: 14px solid #dde1ea;
    text-overflow: clip;
  }

  .combo .caret {
    position: absolute;
    right: 4px;
    pointer-events: none;
  }

  /* navigator */
  .body {
    flex: 1;
    min-height: 0;
    display: flex;
  }

  .navigator {
    width: 285px;
    flex: none;
    display: flex;
    flex-direction: column;
    margin-right: 4px;
    font-family: 'DejaVu Sans Condensed', 'DejaVu Sans', sans-serif;
  }

  .nav-head,
  .panel-head {
    height: 20px;
    flex: none;
    display: flex;
    align-items: center;
    justify-content: space-between;
    padding: 0 5px 0 4px;
    color: #444a55;
  }

  .nav-head {
    height: 21px;
    background: linear-gradient(#f4f6fb, #dfe3ee);
  }

  .panel-head {
    background: #b9c0cb;
  }

  .dock-buttons {
    display: flex;
    gap: 6px;
  }

  .dock-buttons button {
    width: 10px;
    height: 10px;
    display: flex;
  }

  .tree {
    flex: 1;
    min-height: 0;
    background: #fcfcf4;
    border-left: 3px solid #e6eaf3;
    border-right: 1px solid #e6eaf3;
    border-bottom: 1px solid #666;
    padding: 2px 0 0 2px;
    font-size: 12px;
  }

  .node,
  .node label {
    display: flex;
    align-items: center;
    height: 18px;
  }

  .guide {
    width: 19px;
    height: 18px;
    flex: none;
    display: flex;
    position: relative;
    align-items: center;
    justify-content: center;
  }

  .guide.full::before,
  .guide.tee::before {
    content: '';
    position: absolute;
    left: 9px;
    top: 0;
    bottom: 0;
    border-left: 1px dotted #777;
  }

  .guide.tee.first::before {
    top: 9px;
  }

  .guide.tee.last::before {
    bottom: 9px;
  }

  .guide.tee::after {
    content: '';
    position: absolute;
    left: 10px;
    right: 0;
    top: 9px;
    border-top: 1px dotted #777;
  }

  .expander {
    width: 9px;
    height: 9px;
    position: relative;
    z-index: 1;
    border: 1px solid #8f97a5;
    background: linear-gradient(#26408c, #26408c) center / 5px 1px no-repeat, #fff;
  }

  .expander.plus {
    background: linear-gradient(#26408c, #26408c) center / 5px 1px no-repeat, linear-gradient(#26408c, #26408c) center / 1px 5px no-repeat, #fff;
  }

  .node input {
    appearance: none;
    width: 13px;
    height: 13px;
    flex: none;
    margin: 0 3px;
    border: 1px solid #4a4a4a;
    background: linear-gradient(135deg, #d5d8de, #fff);
    display: flex;
    align-items: center;
    justify-content: center;
  }

  .node input[type='radio'] {
    border-radius: 50%;
    border-color: #555;
  }

  .node input[type='radio']:checked::before {
    content: '';
    width: 5px;
    height: 5px;
    border-radius: 50%;
    background: #111;
  }

  .node input[type='checkbox']:checked::before,
  .tick input::before {
    content: '';
    width: 7px;
    height: 4px;
    border-left: 2px solid #111;
    border-bottom: 2px solid #111;
    transform: rotate(-45deg);
    margin-bottom: 2px;
  }

  .node input:indeterminate[type='checkbox']::before {
    content: '';
    width: 7px;
    height: 7px;
    background: #999;
  }

  .caption {
    margin-left: 2px;
    padding: 0 2px;
    line-height: 16px;
    white-space: nowrap;
  }

  .caption.selected {
    background: #0078d7;
    color: #fff;
    outline: 1px dotted #e58a30;
  }

  .nav-tabs {
    height: 24px;
    flex: none;
    display: flex;
    padding: 0 4px;
    color: #3c4452;
  }

  .nav-tabs button {
    height: 20px;
    display: flex;
    align-items: center;
    gap: 2px;
    padding: 2px 3px 0;
    margin-right: 4px;
    white-space: nowrap;
  }

  .nav-tabs .active,
  .panel-tabs .active {
    background: linear-gradient(#dde1e8, #fff);
    border: 1px solid #c5e6ea;
    border-top: 0;
    border-radius: 0 0 4px 4px;
  }

  /* right side */
  main {
    flex: 1;
    min-width: 0;
    display: flex;
    flex-direction: column;
    gap: 5px;
  }

  .upper {
    flex: 1;
    min-height: 0;
    display: flex;
    gap: 5px;
  }

  .viewport {
    flex: 1;
    min-width: 0;
    margin-top: 1px;
    position: relative;
    background: #fff;
    border: 2px solid #6a6a6a;
    border-right: 1px solid #e8e8e8;
    border-bottom: 1px solid #e8e8e8;
    font-family: 'Liberation Sans', sans-serif;
  }

  .scene {
    display: block;
    width: 100%;
    height: 100%;
    font-size: 10px;
  }

  .value {
    font-size: 9px;
  }

  .load {
    font-size: 10px;
    font-weight: bold;
    fill: #000080;
  }

  .scale-text {
    font-size: 11px;
  }

  .info {
    position: absolute;
    left: 4px;
    top: 4px;
    display: flex;
    flex-direction: column;
    line-height: 14px;
  }

  .info.results {
    top: auto;
    bottom: 5px;
  }

  .pointer {
    position: absolute;
    z-index: 2;
    filter: drop-shadow(1px 3px 2px rgba(0, 0, 0, 0.45));
  }

  .at-panel {
    right: 6px;
    top: 226px;
  }

  .at-dock {
    left: 426px;
    bottom: -20px;
  }

  .panel {
    width: 158px;
    flex: none;
    display: flex;
    flex-direction: column;
    font-family: 'DejaVu Sans Condensed', 'DejaVu Sans', sans-serif;
  }

  .panel-body {
    flex: 1;
    background: #efefef;
    border-left: 1px solid #98a3bf;
    border-bottom: 1px solid #777;
    padding: 6px 6px 0 5px;
  }

  .panel-body p {
    margin: 0 0 3px;
    line-height: 16px;
  }

  .factor {
    height: 46px;
    margin-bottom: 10px;
    padding: 2px 2px 0 3px;
    background: #f0f3f9;
    border: 1px solid #d4e0f6;
    border-right-color: #a8aeea;
    border-bottom-color: #a8aeea;
  }

  .factor label {
    display: block;
    line-height: 14px;
  }

  .factor .tick {
    display: flex;
    align-items: center;
    gap: 3px;
    line-height: 16px;
  }

  .tick input {
    appearance: none;
    width: 13px;
    height: 13px;
    border: 1px solid #333;
    background: #fff;
    display: flex;
    align-items: center;
    justify-content: center;
  }

  .tick input::before {
    border-width: 1px;
    border-color: #444;
    width: 9px;
    height: 5px;
  }

  .spin {
    width: 68px;
    height: 20px;
    margin-top: 3px;
    display: flex;
    background: #fff;
    border: 1px solid #7a7a7a;
    border-right-color: #bbb;
  }

  .spin.off {
    background: #efefef;
    border-color: #bbb;
  }

  .spin input {
    flex: 1;
    min-width: 0;
    padding-left: 5px;
  }

  .updown {
    width: 15px;
    display: flex;
    flex-direction: column;
  }

  .updown button {
    flex: 1;
    display: flex;
    align-items: center;
    justify-content: center;
    background: #efefef;
    border: 1px solid #b5b5b5;
  }

  .updown button::before {
    content: '';
    border: 3px solid transparent;
    border-bottom-color: #222;
    border-top: 0;
  }

  .updown button + button::before {
    border-top: 3px solid #222;
    border-bottom: 0;
  }

  .off .updown {
    opacity: 0.5;
  }

  .increment {
    width: 104px;
    height: 21px;
    margin-top: 2px;
    display: flex;
    align-items: center;
    position: relative;
  }

  .increment select {
    appearance: none;
    width: 89px;
    height: 21px;
    padding-left: 8px;
    background: #fff;
    border: 1px solid #7a7a7a;
  }

  .increment > svg {
    position: absolute;
    left: 75px;
    pointer-events: none;
  }

  .increment .updown {
    height: 21px;
  }

  .actions {
    display: flex;
    gap: 6px;
    margin-top: 119px;
  }

  .actions button {
    width: 25px;
    height: 21px;
    display: flex;
    align-items: center;
    justify-content: center;
    background: #e6e6e6;
    border: 1px solid #aaa;
  }

  .actions .right {
    margin-left: auto;
    margin-right: 4px;
  }

  .panel-tabs {
    height: 23px;
    flex: none;
    display: flex;
    align-items: flex-start;
    gap: 8px;
    padding-left: 1px;
  }

  .panel-tabs button {
    width: 23px;
    height: 20px;
    display: flex;
    align-items: center;
    justify-content: center;
  }

  /* table dock */
  .dock {
    flex: none;
    background: #efefef;
    font-family: 'Liberation Sans', sans-serif;
    padding-bottom: 18px;
  }

  .dock .panel-head {
    height: 19px;
    font-family: 'Noto Sans', sans-serif;
  }

  .dock-tools {
    padding-left: 9px;
    border-radius: 0;
    font-family: 'Noto Sans', sans-serif;
  }

  .sheet {
    border: 1px solid #666;
    border-width: 1px 2px;
    box-shadow: inset 0 2px #fff;
    padding: 3px 2px 5px;
    border-bottom: 2px solid #777;
  }

  table {
    width: 100%;
    table-layout: fixed;
    border-collapse: separate;
    border-spacing: 0;
  }

  .c-nr { width: 45px; }
  .c-a { width: 72px; }
  .c-b { width: 66px; }
  .c-c { width: 84px; }
  .c-d { width: 84px; }
  .c-e { width: 84px; }

  th,
  td {
    height: 16px;
    padding: 0;
    border-right: 1px solid #9a9a9a;
    border-bottom: 1px solid #9a9a9a;
    font-weight: normal;
    line-height: 15px;
    white-space: nowrap;
  }

  tbody th,
  .letters th,
  .corner {
    background: #dfdfdf;
    border-color: #777;
    box-shadow: inset 1px 1px #fff;
  }

  .letters th {
    height: 15px;
    line-height: 13px;
    border-top: 1px solid #777;
  }

  .letters .corner {
    background: #efefef;
    line-height: 13px;
    padding-top: 6px;
    vertical-align: middle;
  }

  .letters .chosen,
  tbody .current {
    background: #3399ff;
    color: #fff;
    box-shadow: none;
  }

  .names th {
    border-bottom: 0;
    background: #efefef;
  }

  .units th {
    border-bottom: 1px solid #9a9a9a;
  }

  td {
    position: relative;
    background: #fff;
    text-align: right;
    padding-right: 3px;
  }

  td > span {
    position: relative;
  }

  td.center {
    text-align: center;
    padding: 0;
  }

  td.heading {
    text-align: left;
    padding-left: 4px;
  }

  .strong {
    font-weight: bold;
    font-size: 12px;
  }

  .blue td {
    background: #f8faff;
  }

  .cream td {
    background: #fffaef;
  }

  .rest th,
  .rest td {
    height: 22px;
    background: #efefef;
    border-bottom: 0;
    box-shadow: none;
  }

  .bar {
    position: absolute;
    top: 2px;
    bottom: 2px;
    background: #d8e4ff;
  }

  .bar.negative {
    background: #ffbfbf;
  }

  .zero {
    position: absolute;
    top: 2px;
    bottom: 2px;
    border-left: 1px solid #c8c8c8;
  }

  .sheet-tabs {
    display: flex;
    border-bottom: 1px solid #d5d5d5;
  }

  .sheet-tabs button {
    height: 17px;
    padding: 0 2px;
    background: #dfdfdf;
    border: 1px solid #555;
    border-top: 0;
    border-left: 0;
    border-radius: 0 0 4px 4px;
    white-space: nowrap;
  }

  .sheet-tabs .active {
    background: #f4f4f4;
  }

  /* status bar */
  .statusbar {
    height: 21px;
    flex: none;
    display: flex;
    justify-content: flex-end;
    padding-top: 1px;
    border-top: 1px solid #a4a7ad;
    background: linear-gradient(#e3e5ea, #b0b5be 50%, #a9aeb6 52%, #bcc0c8);
    color: #2c3038;
  }

  .toggles {
    display: flex;
    gap: 2px;
    margin-right: 1px;
  }

  .toggles button {
    height: 19px;
    padding: 0 3px 2px;
    line-height: 14px;
    border: 1px solid #fff;
    border-top-color: #000;
    border-left-color: #000;
  }

  .toggles .raised {
    border-color: #fff #999 #999 #fff;
  }

  .cell {
    border-left: 1px solid #999;
  }

  .w1 { width: 188px; }
  .w2 { width: 88px; }
  .w3 { width: 74px; }
</style>
